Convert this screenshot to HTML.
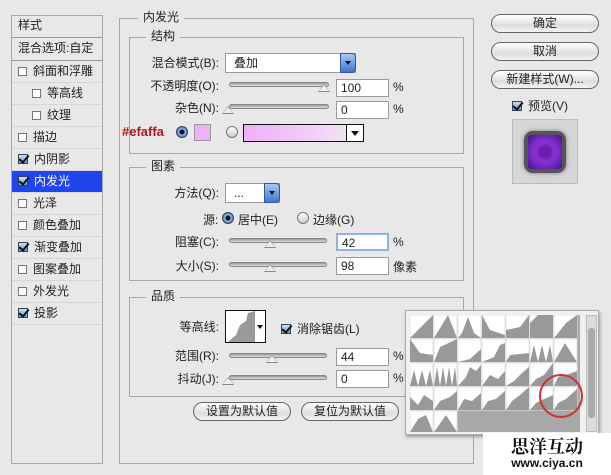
<!DOCTYPE html>
<html><head><meta charset="utf-8"><style>
*{margin:0;padding:0;box-sizing:border-box}
body{width:611px;height:475px;background:#e8e8e8;position:relative;overflow:hidden;font-family:"Liberation Sans","Noto Sans CJK SC",sans-serif;font-size:12px;color:#222}
.a{position:absolute;white-space:nowrap}
.box{position:absolute;border:1px solid #a8a8a8}
.ttl{position:absolute;background:#e8e8e8;padding:0 5px;line-height:14px}
.li{position:absolute;left:12px;width:90px;height:22px;border-bottom:1px solid #d6d6d6;line-height:21px;padding-left:6px}
.cb{display:inline-block;width:9px;height:9px;border:1px solid #777;background:#fff;margin-right:6px;vertical-align:-1px}
.ck{display:inline-block;width:10px;height:10px;border:1px solid #345;background:linear-gradient(#cfe0f5,#6d96cf);margin-right:6px;vertical-align:-1px;position:relative}
.ck:after{content:"";position:absolute;left:2px;top:-2px;width:4px;height:8px;border:solid #111;border-width:0 2px 2px 0;transform:rotate(40deg)}
.lbl{position:absolute;text-align:right;width:100px;line-height:14px}
.in{position:absolute;width:53px;height:18px;background:#fff;border:1px solid #9a9a9a;padding-left:4px;line-height:16px}
.sl{position:absolute;height:5px;border-radius:3px;background:linear-gradient(#999,#ddd);border:1px solid #888}
.th{position:absolute;width:0;height:0;border-left:6px solid transparent;border-right:6px solid transparent;border-bottom:8px solid #888}
.th:after{content:"";position:absolute;left:-5px;top:1px;border-left:5px solid transparent;border-right:5px solid transparent;border-bottom:6px solid #eee}
.btn{position:absolute;height:19px;border:1px solid #666;border-radius:10px;background:linear-gradient(#fff,#ddd 60%,#f4f4f4);text-align:center;line-height:17px}
.rd{position:absolute;width:12px;height:12px;border-radius:50%;border:1px solid #777;background:linear-gradient(#fff,#ccc)}
.rd.on{background:radial-gradient(circle,#111 2px,#8fb4e6 3px,#3d6fc0 6px);border-color:#345}
.sel{position:absolute;background:#fff;border:1px solid #999;padding-left:8px;line-height:18px}
.sa{position:absolute;right:-1px;top:-1px;bottom:-1px;width:16px;border-radius:0 4px 4px 0;background:linear-gradient(#a8c8f0,#3c78d0);border:1px solid #35a}
.sa:after{content:"";position:absolute;left:4px;top:7px;border-left:3px solid transparent;border-right:3px solid transparent;border-top:4px solid #111}
</style></head><body>
<!-- left list -->
<div class="box" style="left:11px;top:15px;width:92px;height:449px;background:#e8e8e8"></div>
<div class="li" style="top:15px;height:23px;border-bottom:1px solid #999">样式</div>
<div class="li" style="top:38px;height:23px;border-bottom:1px solid #999">混合选项:自定</div>
<div class="li" style="top:61px"><span class="cb"></span>斜面和浮雕</div>
<div class="li" style="top:83px;padding-left:20px"><span class="cb"></span>等高线</div>
<div class="li" style="top:105px;padding-left:20px"><span class="cb"></span>纹理</div>
<div class="li" style="top:127px"><span class="cb"></span>描边</div>
<div class="li" style="top:149px"><span class="ck"></span>内阴影</div>
<div class="li" style="top:171px;background:#1f45ee;color:#fff"><span class="ck"></span>内发光</div>
<div class="li" style="top:193px"><span class="cb"></span>光泽</div>
<div class="li" style="top:215px"><span class="cb"></span>颜色叠加</div>
<div class="li" style="top:237px"><span class="ck"></span>渐变叠加</div>
<div class="li" style="top:259px"><span class="cb"></span>图案叠加</div>
<div class="li" style="top:281px"><span class="cb"></span>外发光</div>
<div class="li" style="top:303px"><span class="ck"></span>投影</div>

<!-- main group -->
<div class="box" style="left:119px;top:18px;width:355px;height:446px"></div>
<div class="ttl" style="left:138px;top:10px">内发光</div>
<div class="box" style="left:129px;top:37px;width:335px;height:117px"></div>
<div class="ttl" style="left:146px;top:29px">结构</div>
<div class="lbl" style="left:119px;top:56px">混合模式(B):</div>
<div class="sel" style="left:225px;top:53px;width:131px;height:20px">叠加<div class="sa"></div></div>
<div class="lbl" style="left:119px;top:79px">不透明度(O):</div>
<div class="sl" style="left:229px;top:82px;width:100px"></div><div class="th" style="left:318px;top:84px"></div>
<div class="in" style="left:336px;top:79px">100</div><div class="a" style="left:393px;top:80px">%</div>
<div class="lbl" style="left:119px;top:101px">杂色(N):</div>
<div class="sl" style="left:229px;top:104px;width:100px"></div><div class="th" style="left:222px;top:106px"></div>
<div class="in" style="left:336px;top:101px">0</div><div class="a" style="left:393px;top:102px">%</div>
<div class="a" style="left:122px;top:124px;color:#b0141e;font-weight:bold;font-size:13px">#efaffa</div>
<div class="rd on" style="left:176px;top:126px"></div>
<div class="a" style="left:194px;top:124px;width:17px;height:17px;background:#efaffa;border:1px solid #999"></div>
<div class="rd" style="left:226px;top:126px"></div>
<div class="a" style="left:243px;top:124px;width:121px;height:18px;border:1px solid #111;background:linear-gradient(90deg,#efaffa,#f3d0f8 60%,#eee)"></div>
<div class="a" style="left:346px;top:124px;width:18px;height:18px;border:1px solid #111;background:#fff"><div style="position:absolute;left:4px;top:6px;border-left:4px solid transparent;border-right:4px solid transparent;border-top:5px solid #111"></div></div>

<div class="box" style="left:129px;top:167px;width:335px;height:114px"></div>
<div class="ttl" style="left:146px;top:159px">图素</div>
<div class="lbl" style="left:119px;top:186px">方法(Q):</div>
<div class="sel" style="left:225px;top:183px;width:55px;height:20px">...<div class="sa"></div></div>
<div class="a" style="left:203px;top:211px">源:</div>
<div class="rd on" style="left:222px;top:212px"></div><div class="a" style="left:238px;top:211px">居中(E)</div>
<div class="rd" style="left:297px;top:212px"></div><div class="a" style="left:313px;top:211px">边缘(G)</div>
<div class="lbl" style="left:119px;top:235px">阻塞(C):</div>
<div class="sl" style="left:229px;top:238px;width:98px"></div><div class="th" style="left:264px;top:240px"></div>
<div class="in" style="left:336px;top:233px;border:2px solid #8fb2e2">42</div><div class="a" style="left:393px;top:235px">%</div>
<div class="lbl" style="left:119px;top:259px">大小(S):</div>
<div class="sl" style="left:229px;top:262px;width:98px"></div><div class="th" style="left:264px;top:264px"></div>
<div class="in" style="left:336px;top:257px">98</div><div class="a" style="left:393px;top:258px">像素</div>

<div class="box" style="left:129px;top:297px;width:335px;height:100px"></div>
<div class="ttl" style="left:146px;top:289px">品质</div>
<div class="lbl" style="left:119px;top:320px">等高线:</div>
<div class="a" style="left:225px;top:310px;width:41px;height:33px;border:1px solid #111;background:#fff">
<svg width="29" height="31" style="position:absolute;left:0;top:0"><polygon points="2,31 10,24 14,14 20,10 22,2 29,0 29,31" fill="#999"/></svg>
<div style="position:absolute;left:31px;top:14px;border-left:3px solid transparent;border-right:3px solid transparent;border-top:4px solid #111"></div></div>
<div class="a" style="left:281px;top:320px"><span class="ck"></span>消除锯齿(L)</div>
<div class="lbl" style="left:119px;top:349px">范围(R):</div>
<div class="sl" style="left:229px;top:353px;width:98px"></div><div class="th" style="left:266px;top:355px"></div>
<div class="in" style="left:336px;top:348px">44</div><div class="a" style="left:393px;top:349px">%</div>
<div class="lbl" style="left:119px;top:372px">抖动(J):</div>
<div class="sl" style="left:229px;top:375px;width:98px"></div><div class="th" style="left:222px;top:377px"></div>
<div class="in" style="left:336px;top:370px">0</div><div class="a" style="left:393px;top:371px">%</div>
<div class="btn" style="left:193px;top:402px;width:98px">设置为默认值</div>
<div class="btn" style="left:301px;top:402px;width:98px">复位为默认值</div>

<!-- right -->
<div class="btn" style="left:491px;top:14px;width:108px">确定</div>
<div class="btn" style="left:491px;top:42px;width:108px">取消</div>
<div class="btn" style="left:491px;top:70px;width:108px">新建样式(W)...</div>
<div class="a" style="left:512px;top:97px"><span class="ck"></span>预览(V)</div>
<div class="a" style="left:512px;top:119px;width:66px;height:65px;background:#d6d6d6;border:1px solid #bbb">
<div style="position:absolute;left:11px;top:11px;width:42px;height:42px;border-radius:9px;background:#555;box-shadow:0 0 4px #777"></div>
<div style="position:absolute;left:15px;top:15px;width:34px;height:34px;border-radius:3px;background:radial-gradient(circle,#6a1fb0 5px,#8a30d0 9px,#7a2ac8 14px,#4a1890 22px)"></div></div>

<!-- popup -->
<div class="a" style="left:405px;top:310px;width:194px;height:125px;background:#f0f0f0;border:1px solid #aaa;box-shadow:1px 2px 3px #999">
<div style="position:absolute;left:4px;top:4px;width:170px;height:117px;background:#a8a8a8"></div>
<svg width="170" height="117" style="position:absolute;left:4px;top:4px">
<g fill="#fff" stroke="#e0e0e0" stroke-width="1">
<rect x="0" y="0" width="23" height="23"/><rect x="24" y="0" width="23" height="23"/><rect x="48" y="0" width="23" height="23"/><rect x="72" y="0" width="23" height="23"/><rect x="96" y="0" width="23" height="23"/><rect x="120" y="0" width="23" height="23"/><rect x="144" y="0" width="23" height="23"/>
<rect x="0" y="24" width="23" height="23"/><rect x="24" y="24" width="23" height="23"/><rect x="48" y="24" width="23" height="23"/><rect x="72" y="24" width="23" height="23"/><rect x="96" y="24" width="23" height="23"/><rect x="120" y="24" width="23" height="23"/><rect x="144" y="24" width="23" height="23"/>
<rect x="0" y="48" width="23" height="23"/><rect x="24" y="48" width="23" height="23"/><rect x="48" y="48" width="23" height="23"/><rect x="72" y="48" width="23" height="23"/><rect x="96" y="48" width="23" height="23"/><rect x="120" y="48" width="23" height="23"/><rect x="144" y="48" width="23" height="23"/>
<rect x="0" y="72" width="23" height="23"/><rect x="24" y="72" width="23" height="23"/><rect x="48" y="72" width="23" height="23"/><rect x="72" y="72" width="23" height="23"/><rect x="96" y="72" width="23" height="23"/><rect x="120" y="72" width="23" height="23"/><rect x="144" y="72" width="23" height="23"/>
<rect x="0" y="96" width="23" height="21"/><rect x="24" y="96" width="23" height="21"/>
</g>
<g fill="#999">
<polygon points="0,23 23,0 23,23"/><polygon points="24,23 38,0 47,23"/><polygon points="48,23 52,18 58,2 64,18 71,23"/><polygon points="72,23 72,0 80,15 95,20 95,23"/><polygon points="96,23 96,15 110,12 119,0 119,23"/><polygon points="120,23 120,8 128,0 143,0 143,23"/><polygon points="144,23 156,8 167,0 167,23"/>
<polygon points="0,47 0,24 10,38 23,40 23,47"/><polygon points="24,47 30,32 47,24 47,47"/><polygon points="48,47 60,44 71,34 71,47"/><polygon points="72,47 84,42 90,30 95,28 95,47"/><polygon points="96,47 100,40 119,38 119,47"/><polygon points="120,47 124,30 128,47 132,30 136,47 140,30 143,47"/><polygon points="144,47 155,28 167,47"/>
<polygon points="0,71 4,55 8,71 12,55 16,71 20,55 23,71"/><polygon points="24,71 27,52 30,71 33,52 36,71 39,52 42,71 45,52 47,71"/><polygon points="48,71 56,62 60,52 66,56 71,50 71,71"/><polygon points="72,71 80,60 88,64 95,56 95,71"/><polygon points="96,71 104,66 112,58 119,52 119,71"/><polygon points="120,71 126,64 134,60 140,52 143,48 143,71"/><polygon points="144,71 148,62 156,60 167,56 167,71"/>
<polygon points="0,95 0,82 8,90 14,80 23,86 23,95"/><polygon points="24,95 30,86 40,82 47,76 47,95"/><polygon points="48,95 54,84 62,86 71,78 71,95"/><polygon points="72,95 78,86 86,84 95,76 95,95"/><polygon points="96,95 102,86 110,80 119,72 119,95"/><polygon points="120,95 126,88 134,84 143,80 143,95"/><polygon points="144,95 148,88 156,84 167,74 167,95"/>
<polygon points="24,117 36,100 47,117"/><polygon points="0,117 8,104 16,100 23,117"/>
</g>
</svg>
<div style="position:absolute;left:180px;top:4px;width:11px;height:117px;background:#ddd;border:1px solid #bbb"><div style="position:absolute;left:1px;top:12px;width:7px;height:90px;background:#aaa;border-radius:3px"></div></div>
<div style="position:absolute;left:133px;top:63px;width:44px;height:44px;border:2px solid #d0303a;border-radius:50%"></div>
</div>

<!-- watermark -->
<div class="a" style="left:483px;top:433px;width:128px;height:42px;background:#fff;text-align:center">
<div style="font-size:18px;font-weight:bold;line-height:20px;margin-top:3px;font-family:'Noto Serif CJK SC',serif;color:#111">思洋互动</div>
<div style="font-size:12px;font-weight:bold;line-height:14px;color:#111">www.ciya.cn</div></div>
</body></html>
